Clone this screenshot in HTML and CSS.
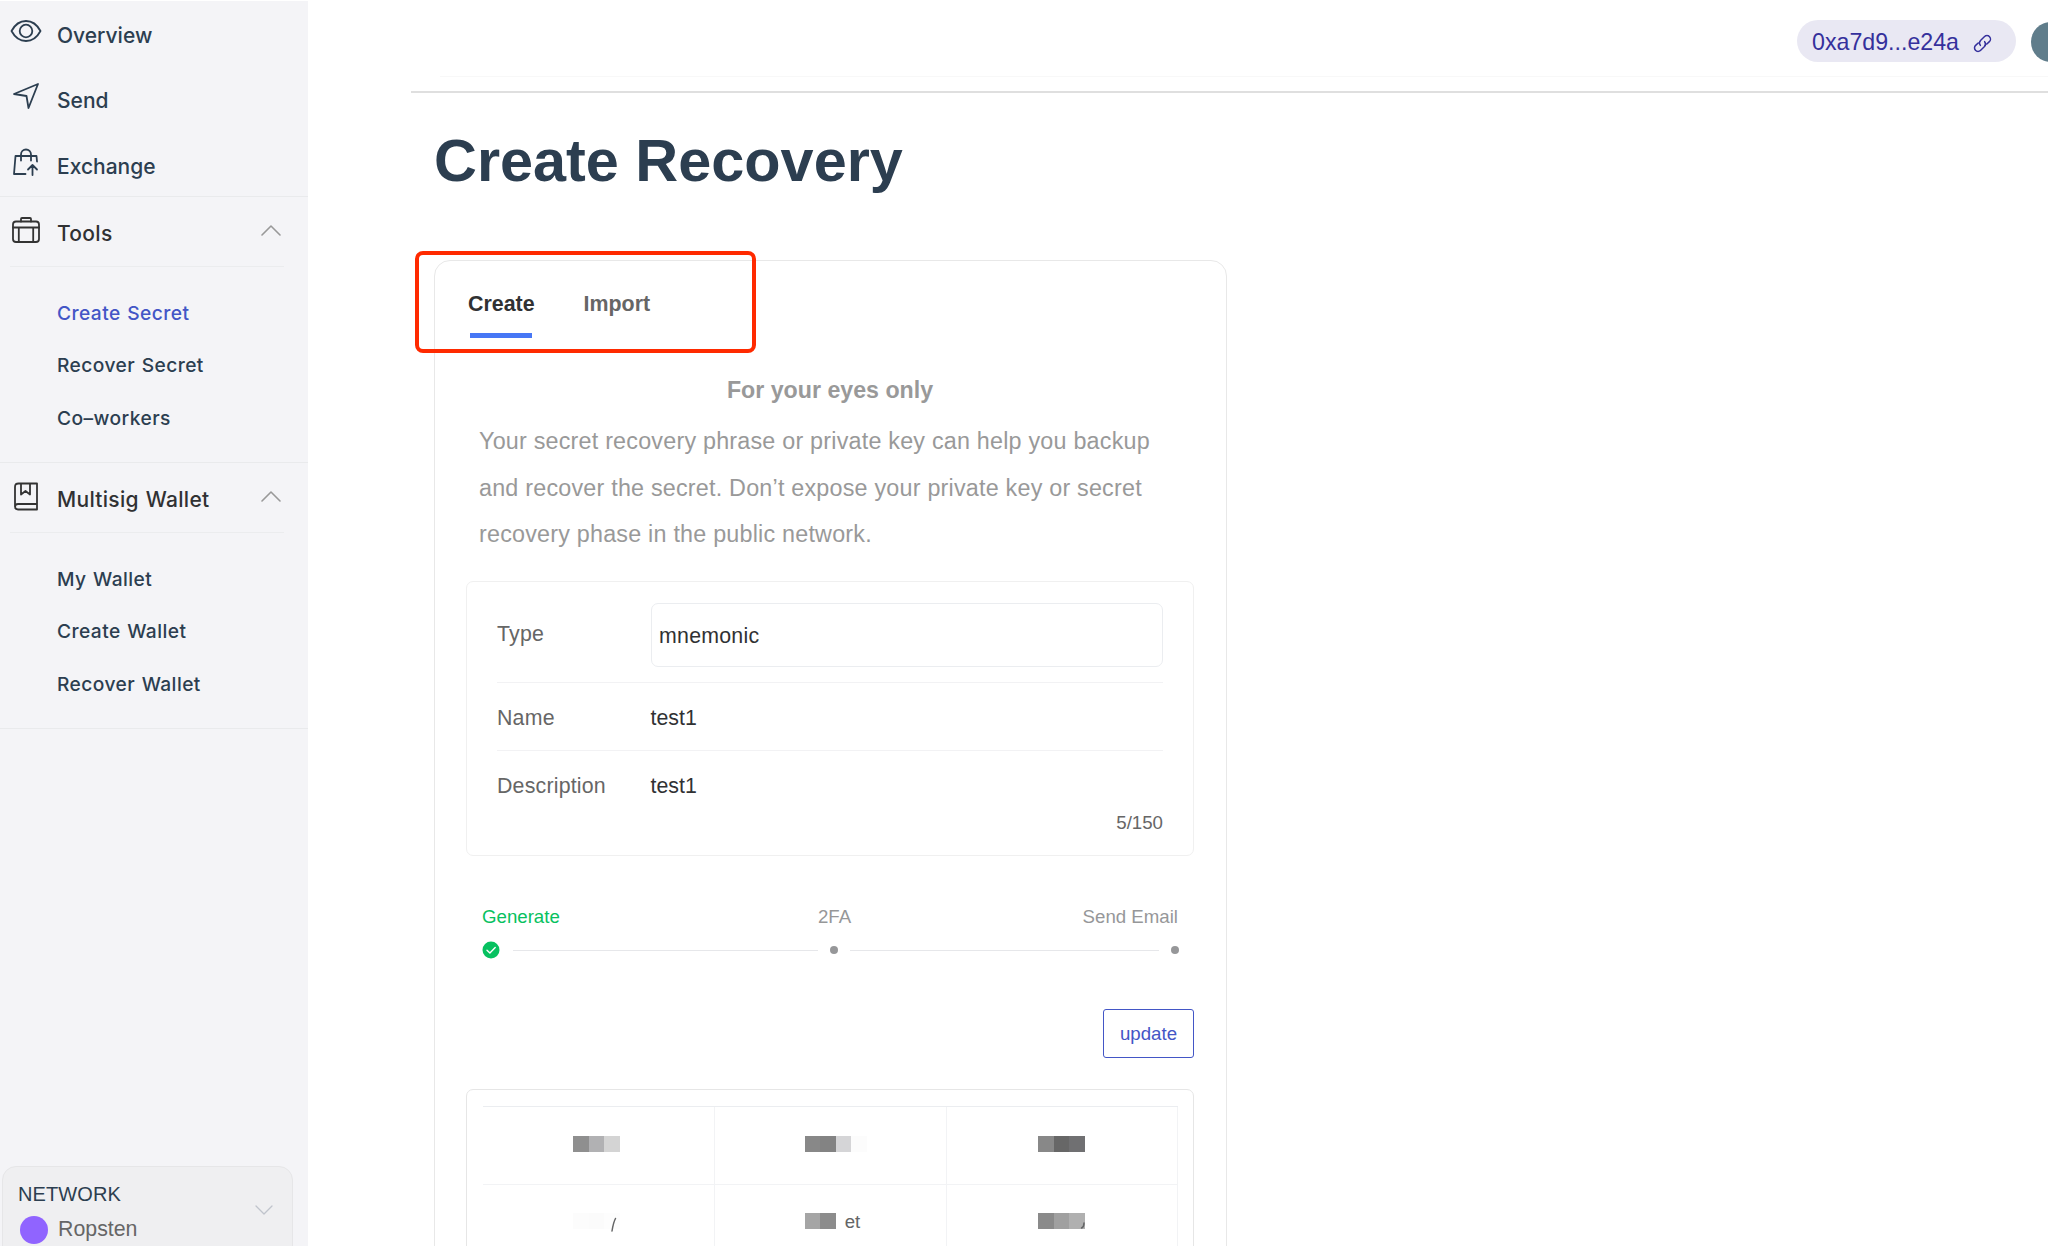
FILE: index.html
```html
<!DOCTYPE html>
<html lang="en">
<head>
<meta charset="utf-8">
<title>Create Recovery</title>
<link rel="stylesheet" href="styles.css">
</head>
<body>
<div class="app">
  <aside class="sidebar">
    <nav class="primary">
      <a class="nav-item"><svg class="icon" viewBox="0 0 32 32"><path d="M1.500 16C5 9.500 10 6 16 6S27 9.500 30.500 16C27 22.500 22 26 16 26S5 22.500 1.500 16Z"/><circle cx="16" cy="16" r="6.300"/></svg><span>Overview</span></a>
      <a class="nav-item"><svg class="icon" viewBox="0 0 32 32"><path d="M4 14L28 4L18.500 28L16.500 16Z"/></svg><span>Send</span></a>
      <a class="nav-item"><svg class="icon" viewBox="0 0 32 32"><path d="M15.500 28H4L5.500 10H26.500L27 15.500M11 14.500V8.500A5 5 0 0 1 21 8.500V14.500M22.500 29V19.500M18 23.500L22.500 19L27 23.500"/></svg><span>Exchange</span></a>
    </nav>
    <section class="group">
      <header class="group-head"><svg class="icon dark" viewBox="0 0 32 32"><rect x="3" y="7.500" width="26" height="20.500" rx="3"/><path d="M11 7.500V5Q11 4 12 4H20Q21 4 21 5V7.500M3 13.500H29M8.800 13.500V28M23.200 13.500V28"/></svg><span>Tools</span><svg class="chev" viewBox="0 0 20 12"><path d="M1 11L10 2L19 11"/></svg></header>
      <ul class="links">
        <li class="active">Create Secret</li>
        <li>Recover Secret</li>
        <li>Co–workers</li>
      </ul>
    </section>
    <section class="group">
      <header class="group-head"><svg class="icon dark" viewBox="0 0 32 32"><path d="M27 3.500V29.500H8Q5 29.500 5 26.500V7Q5 3.500 8.500 3.500ZM5 27Q5 24 8 24H27M11 3.500V14.500L15.500 11L20 14.500V3.500"/></svg><span>Multisig Wallet</span><svg class="chev" viewBox="0 0 20 12"><path d="M1 11L10 2L19 11"/></svg></header>
      <ul class="links">
        <li>My Wallet</li>
        <li>Create Wallet</li>
        <li>Recover Wallet</li>
      </ul>
    </section>
    <div class="network">
      <div class="network-text">
        <div class="network-title">NETWORK</div>
        <div class="network-name"><i class="net-dot"></i><span>Ropsten</span></div>
      </div>
      <svg class="net-chev" viewBox="0 0 18 11"><path d="M1 1L9 9L17 1"/></svg>
    </div>
  </aside>
  <main class="main">
    <header class="topbar">
      <div class="address"><span>0xa7d9...e24a</span><svg class="link-icon" viewBox="0 0 24 24"><path d="M9.500 14.500a5 5 0 0 1 0-6.500l4.500-5a4.300 4.300 0 0 1 6.500 6l-3 3.300M14.500 9.500a5 5 0 0 1 0 6.500l-4.500 5a4.300 4.300 0 0 1-6.500-6l3-3.300"/></svg></div>
      <i class="avatar"></i>
    </header>
    <div class="strip"></div>
    <h1>Create Recovery</h1>
    <section class="card">
      <div class="tabs"><span class="tab on">Create</span><span class="tab">Import</span><i class="highlight"></i></div>
      <h2>For your eyes only</h2>
      <p class="intro">Your secret recovery phrase or private key can help you backup<br>and recover the secret. Don’t expose your private key or secret<br>recovery phase in the public network.</p>
      <div class="form">
        <div class="row row-type"><label>Type</label><div class="select">mnemonic</div></div>
        <div class="row row-name"><label>Name</label><span>test1</span></div>
        <div class="row row-desc"><label>Description</label><span>test1</span></div>
        <div class="count">5/150</div>
      </div>
      <div class="step-labels"><span class="done">Generate</span><span>2FA</span><span class="last">Send Email</span></div>
      <div class="step-track"><svg class="check" viewBox="0 0 18 18"><circle cx="9" cy="9" r="8.500"/><path d="M5 9.200L7.900 12L13.200 6.600"/></svg><i class="line l1"></i><i class="dot"></i><i class="line l2"></i><i class="dot"></i></div>
      <div class="actions"><button class="update">update</button></div>
      <div class="words">
        <div class="grid">
          <div class="cell"><div class="mosaic"><i class="g8f"></i><i class="gb1"></i><i class="gd4"></i></div></div>
          <div class="cell"><div class="mosaic"><i class="g88"></i><i class="g83"></i><i class="gd5"></i><i class="gfc"></i></div></div>
          <div class="cell"><div class="mosaic"><i class="g88"></i><i class="g67"></i><i class="g70"></i></div></div>
          <div class="cell"><div class="mosaic"><i class="gfc"></i><i class="gfb"></i><i class="gfd"></i></div><svg class="tail" viewBox="0 0 8 16"><path d="M1 14Q2.500 5 4.500 1.500"/></svg></div>
          <div class="cell"><div class="mosaic"><i class="ga5"></i><i class="g8c"></i></div><span class="et">et</span></div>
          <div class="cell"><div class="mosaic"><i class="g8a"></i><i class="ga0"></i><i class="gb0"></i></div><svg class="tail hook" viewBox="0 0 8 16"><path d="M1.500 15Q4 14 4 10"/></svg></div>
        </div>
      </div>
    </section>
  </main>
</div>
</body>
</html>
```
FILE: styles.css
```css
* { box-sizing: border-box; }
body { margin: 0; background: #fff; font-family: "Liberation Sans", Arial, sans-serif; color: #2c3e50; overflow: hidden; }
.app { display: flex; width: 2048px; height: 1246px; overflow: hidden; }
i { display: block; font-style: normal; }
svg { fill: none; stroke: currentColor; stroke-linecap: round; stroke-linejoin: round; }

/* sidebar */
.sidebar { width: 308px; flex: none; height: 1245px; margin-top: 1px; background: #f4f4f7; display: flex; flex-direction: column; font-family: Inter, "Liberation Sans", sans-serif; font-weight: 450; }
.primary { height: 196px; border-bottom: 1px solid #e9eaec; padding-top: 1px; }
.nav-item { display: flex; height: 65.300px; padding: 12px 0 0 10px; font-size: 21px; line-height: 43px; }
.icon { width: 32px; height: 32px; flex: none; stroke-width: 1.800; margin: 1px 15px 0 0; }
.dark { color: #333; }
.group { height: 266px; border-bottom: 1px solid #e9eaec; }
.group-head { display: flex; align-items: flex-start; height: 70px; margin: 0 24px 0 10px; padding-top: 16px; border-bottom: 1px solid #ebecee; color: #303133; font-size: 21px; line-height: 42px; letter-spacing: .300px; word-spacing: 1px; }
.chev { width: 20px; height: 12px; margin: 11px 3px 0 auto; color: #999; stroke-width: 1.600; }
.links { list-style: none; margin: 0; padding: 19.500px 0 0 57px; font-size: 19.200px; line-height: 52.700px; letter-spacing: .430px; word-spacing: 1px; }
.active { color: #4356c6; }
.network { width: 291px; height: 110px; margin: auto 0 -30px 2px; background: #efeff1; border: 1.500px solid #e6e6e8; border-radius: 14px; display: flex; padding: 13px 19px 0 15px; font-family: "Liberation Sans", Arial, sans-serif; flex: none; font-weight: 400; }
.network-text { flex: 1; }
.network-title { font-size: 20px; line-height: 28px; letter-spacing: .100px; }
.network-name { display: flex; align-items: center; font-size: 21.330px; line-height: 43px; color: #666; }
.net-dot { width: 28px; height: 28px; margin: 0 10px 0 2px; border-radius: 50%; background: #9064ff; }
.net-chev { width: 18px; height: 11px; margin-top: 25px; color: #c0c4cc; stroke-width: 1.300; }

/* top bar */
.main { flex: 1; padding-left: 103px; min-width: 0; }
.topbar { height: 77px; display: flex; justify-content: flex-end; padding-top: 20px; margin-left: 29px; border-bottom: 1px solid #f8f8f8; }
.address { width: 219px; height: 42px; flex: none; display: flex; align-items: center; padding: 2px 0 0 15px; border-radius: 21px; background: #e9e8f3; color: #35309c; font-size: 23.200px; }
.link-icon { width: 19px; height: 19px; margin: 2px 0 0 14px; stroke-width: 1.900; transform: rotate(4deg); }
.avatar { width: 40px; height: 40px; margin: 2px -23px 0 15px; flex: none; border-radius: 50%; background: #607d8b; }
.strip { height: 16px; border-bottom: 2px solid #dfdfdf; }
h1 { margin: 0 0 0 23px; height: 167px; padding-top: 32px; font-size: 59.400px; line-height: 72px; }

/* card */
.card { width: 793px; height: 1020px; margin-left: 23px; border: 1.500px solid #e8e8e8; border-radius: 16px; padding: 0 32px 0 31px; }
.tabs { position: relative; display: flex; gap: 49px; height: 92px; padding: 30px 0 0 2px; font-size: 21.400px; font-weight: bold; line-height: 26px; color: #666; }
.tab.on { color: #303133; background: linear-gradient(#4777f5, #4777f5) 2px 42px / 62px 5px no-repeat; height: 48px; }
.highlight { position: absolute; left: -51px; top: -10px; width: 341px; height: 102px; border: 4.500px solid #ff2a00; border-radius: 8px; }
h2 { margin: 0; height: 66px; padding-top: 23px; text-align: center; font-size: 23.200px; line-height: 28px; color: #999; }
.intro { margin: -1px 0 23px 13px; height: 140px; font-size: 23.330px; letter-spacing: .210px; line-height: 46.600px; color: #999; white-space: nowrap; }
.form { height: 275px; width: 728px; border: 1.500px solid #f0f0f0; border-radius: 7px; padding: 21px 30px 0; font-size: 21.330px; color: #666; }
.row { display: flex; }
.row label { width: 153.500px; flex: none; letter-spacing: .200px; }
.row span, .select { color: #303133; }
.row-type { height: 80px; border-bottom: 1px solid #f2f2f4; line-height: 62px; }
.select { flex: 1; height: 64px; border: 1.500px solid #ebedf0; border-radius: 7px; padding-left: 7.500px; line-height: 64px; letter-spacing: .250px; }
.row-name { height: 68px; border-bottom: 1px solid #f2f2f4; line-height: 70px; }
.row-desc { height: 60px; line-height: 70px; }
.count { text-align: right; font-size: 18.670px; line-height: 24px; }
.step-labels { display: grid; grid-template-columns: 1fr auto 1fr; margin: 49px 16px 0 16px; font-size: 18.670px; line-height: 24px; color: #969799; }
.last { text-align: right; }
.done { color: #07c160; }
.step-labels span:nth-child(2) { padding-left: 9px; }
.step-track { display: flex; align-items: center; height: 18px; margin: 12px 14px 0 16px; }
.check { width: 18px; height: 18px; flex: none; fill: #07c160; stroke: none; }
.check path { fill: none; stroke: #fff; stroke-width: 1.400; }
.line { height: 1px; background: #e6e7ea; }
.l1 { width: 305px; margin: 0 12px 0 13px; }
.l2 { width: 309px; margin: 0 12px; }
.dot { width: 8px; height: 8px; flex: none; border-radius: 50%; background: #969799; }
.actions { display: flex; justify-content: flex-end; margin: 50px 0 31px 0; }
.update { width: 91px; height: 49px; padding: 0; border: 1.500px solid #4356c6; border-radius: 3px; background: #fff; color: #4356c6; font: 18.670px "Liberation Sans", Arial, sans-serif; }
.words { width: 728px; height: 230px; border: 1.500px solid #e6e6e6; border-radius: 7px; padding: 16px 15px 0 16px; }
.grid { display: grid; grid-template-columns: 231.500px 232.500px 231px; grid-auto-rows: 77.500px; border-top: 1px solid #ebedf0; }
.cell { display: flex; padding: 28.500px 0 0 90px; border-right: 1px solid #f2f3f5; border-bottom: 1px solid #f2f3f5; }
.cell:nth-child(3n) { padding-left: 91px; }
.mosaic { display: flex; flex: none; }
.mosaic i { width: 15.600px; height: 16px; }
.g67 { background: #676767; } .g70 { background: #707072; } .g83 { background: #838383; }
.g88 { background: #888; } .g8a { background: #8a8a8a; } .g8c { background: #8c8c8c; }
.g8f { background: #8f8f8f; } .ga0 { background: #a0a0a0; } .ga5 { background: #a5a5a5; }
.gb0 { background: #b0b0b0; } .gb1 { background: #b1b1b3; } .gd4 { background: #d4d4d4; }
.gd5 { background: #d5d5d7; } .gfb { background: #fbfbfb; } .gfc { background: #fcfcfc; } .gfd { background: #fdfdfd; }
.et { margin-left: 9px; font-size: 18.670px; line-height: 18px; color: #646566; }
.tail { width: 8px; height: 16px; margin: 4px 0 0 -9px; color: #646566; stroke-width: 1.500; }
.hook { margin: 0 0 0 -5px; }
```
